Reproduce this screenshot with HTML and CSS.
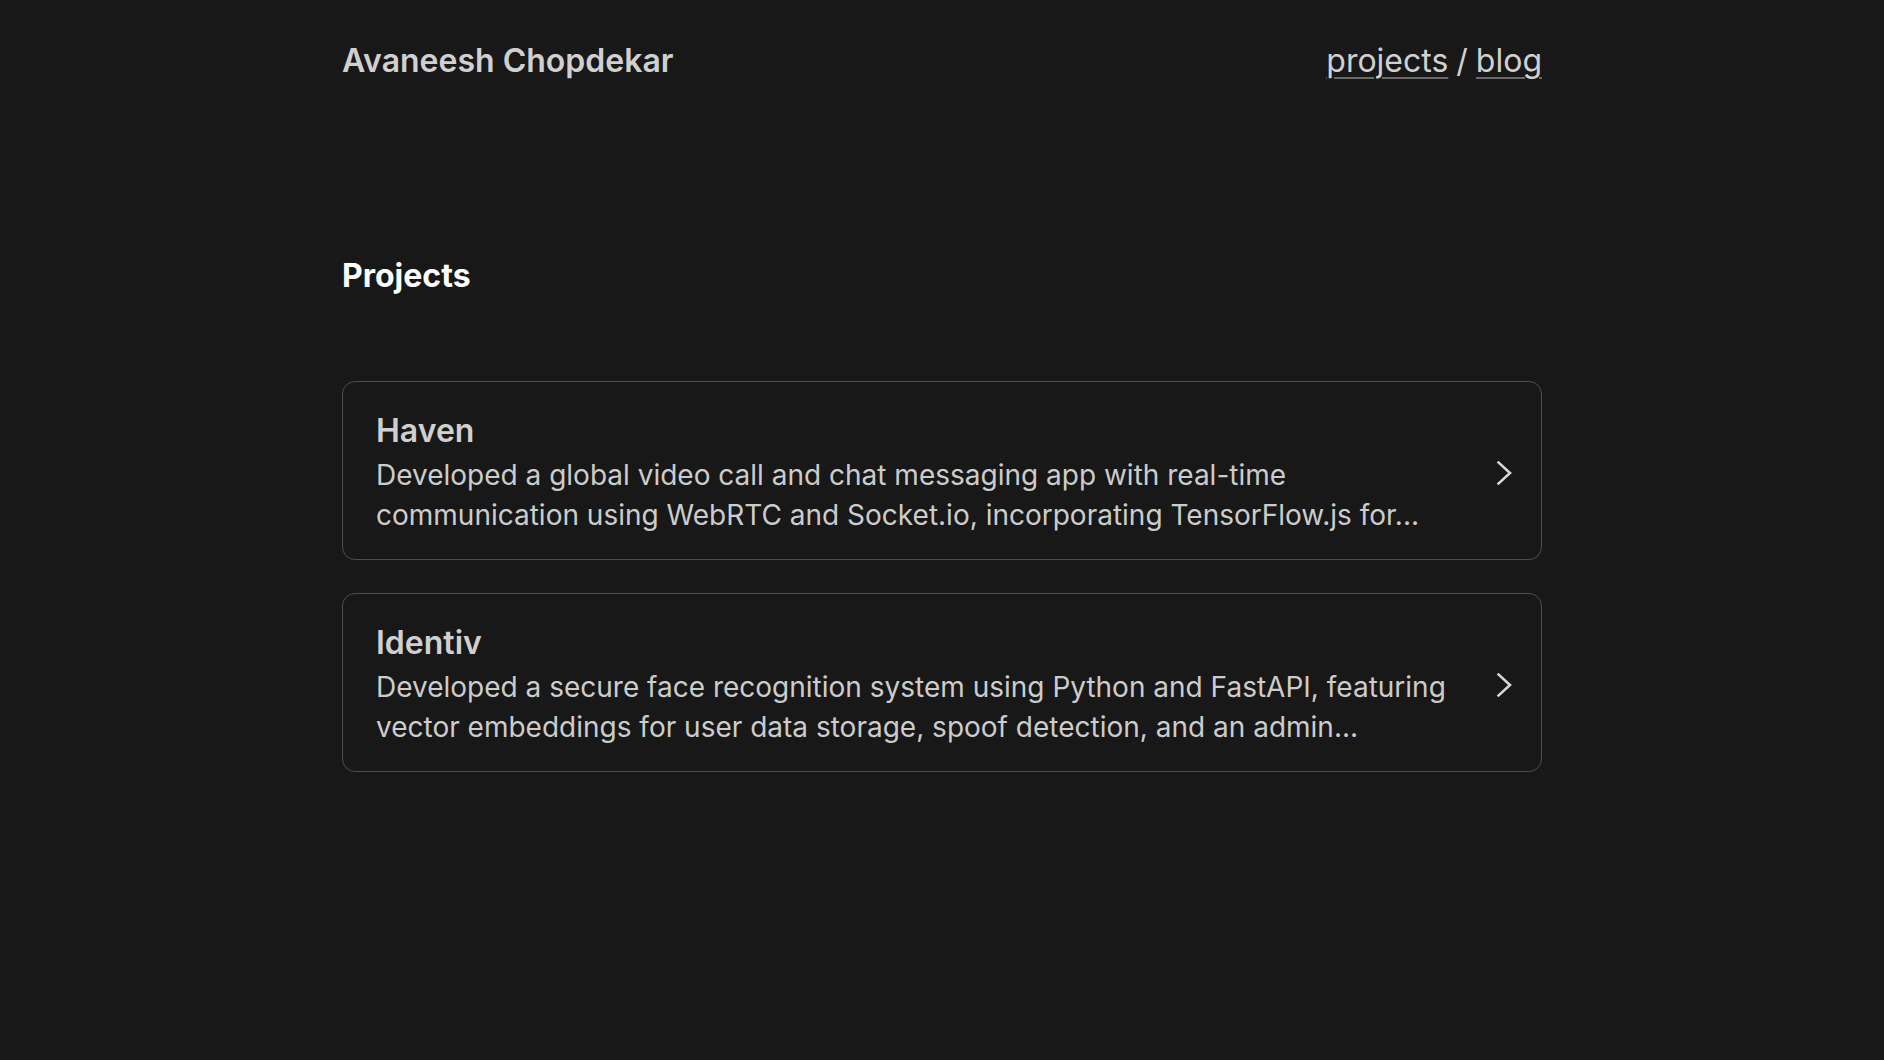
FILE: index.html
```html
<!DOCTYPE html>
<html lang="en">
<head>
<meta charset="utf-8">
<title>Avaneesh Chopdekar - Projects</title>
<link rel="stylesheet" href="styles.css">
</head>
<body>
<div class="container">
  <header class="site-header">
    <a class="brand" href="#">Avaneesh Chopdekar</a>
    <nav class="nav">
      <a class="nav-link" href="#">projects</a>
      <span class="sep">/</span>
      <a class="nav-link" href="#">blog</a>
    </nav>
  </header>
  <main class="main">
    <h1 class="page-title">Projects</h1>
    <div class="cards">
      <a class="card" href="#">
        <div class="card-body">
          <h2 class="card-title">Haven</h2>
          <p class="card-desc">Developed a global video call and chat messaging app with real-time communication using WebRTC and Socket.io, incorporating TensorFlow.js for...</p>
        </div>
        <svg class="chevron" width="16" height="26" viewBox="0 0 16 26" aria-hidden="true"><polyline points="1.6,1.6 14,13 1.6,24.4" fill="none" stroke="currentColor" stroke-width="2.6" stroke-linecap="butt" stroke-linejoin="miter"/></svg>
      </a>
      <a class="card" href="#">
        <div class="card-body">
          <h2 class="card-title">Identiv</h2>
          <p class="card-desc">Developed a secure face recognition system using Python and FastAPI, featuring vector embeddings for user data storage, spoof detection, and an admin...</p>
        </div>
        <svg class="chevron" width="16" height="26" viewBox="0 0 16 26" aria-hidden="true"><polyline points="1.6,1.6 14,13 1.6,24.4" fill="none" stroke="currentColor" stroke-width="2.6" stroke-linecap="butt" stroke-linejoin="miter"/></svg>
      </a>
    </div>
  </main>
</div>
</body>
</html>
```
FILE: styles.css
```css
html, body {
  margin: 0;
  padding: 0;
}
body {
  background: #181818;
  color: #d0d0d0;
  font-family: Inter, "Noto Sans", "Liberation Sans", sans-serif;
}
.container {
  width: 1200px;
  margin: 0 auto;
}
.site-header {
  display: flex;
  justify-content: space-between;
  align-items: baseline;
  padding-top: 41px;
  font-size: 32px;
  line-height: 39px;
}
.brand {
  color: #d0d0d0;
  font-weight: 600;
  text-decoration: none;
}
.nav {
  display: flex;
  gap: 8px;
  color: #d0d0d0;
}
.nav-link {
  color: #d0d0d0;
  text-decoration: underline;
  text-decoration-color: #6a6a6a;
  text-decoration-thickness: 2px;
  text-underline-offset: 5px;
}
.main {
  padding-top: 176px;
}
.page-title {
  margin: 0;
  font-size: 32px;
  line-height: 39px;
  font-weight: 700;
  color: #ffffff;
}
.cards {
  margin-top: 86px;
  display: flex;
  flex-direction: column;
  gap: 33px;
}
.card {
  display: flex;
  align-items: center;
  gap: 32px;
  border: 1.5px solid #4e4e4e;
  border-radius: 13px;
  padding: 29px 29px 24px 33px;
  text-decoration: none;
  color: #cfcfcf;
}
.card-body {
  flex: 1;
}
.card-title {
  margin: 0 0 4px;
  font-size: 32px;
  line-height: 40px;
  font-weight: 600;
  color: #d0d0d0;
}
.card-desc {
  margin: 0;
  font-size: 28px;
  line-height: 40px;
  color: #cccccc;
}
.chevron {
  flex: none;
  color: #d6d6d6;
}
```
